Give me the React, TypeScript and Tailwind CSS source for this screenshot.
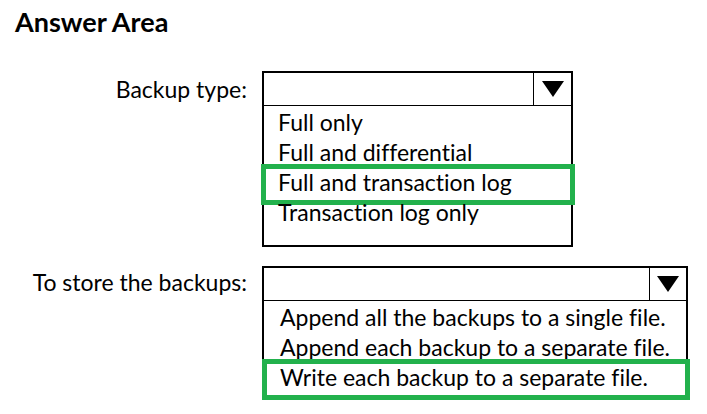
import React from 'react'

type Item = { label: string; picked?: boolean }

const font = { fontFamily: 'Lato, "Liberation Sans", sans-serif', fontVariantLigatures: 'none' as const }

function Arrow() {
  return (
    <svg width="22" height="16" viewBox="0 0 22 16" className="block">
      <polygon points="0,0 22,0 11,16" fill="#000" />
    </svg>
  )
}

function Dropdown({ width, cell, indent, items, tail, frame }: { width: string; cell: string; indent: string; items: Item[]; tail: string; frame: string }) {
  return (
    <div className={`border-2 border-black bg-white ${width}`}>
      <div className="flex h-[33px] border-b border-black">
        <div className="flex-1" />
        <div className={`flex items-center justify-center border-l border-black ${cell}`}>
          <Arrow />
        </div>
      </div>
      <div className={`pt-[4px] ${tail}`}>
        {items.map(it => (
          <div key={it.label} className={`relative h-[30px] text-[23px] leading-[25px] text-black ${indent}`}>
            {it.label}
            {it.picked && <div className={`absolute -top-[6px] -bottom-[5px] border-[5px] border-[#22b14c] ${frame}`} />}
          </div>
        ))}
      </div>
    </div>
  )
}

export default function App() {
  return (
    <div className="h-[414px] w-[707px] bg-white text-black" style={font}>
      <h1 className="pl-[15px] pt-[7px] text-[27px] font-bold leading-[30px]">Answer Area</h1>

      <div className="mt-[34px] flex items-start gap-[15px]">
        <div className="w-[247px] pt-[3px] text-right text-[23px] leading-[30px]">Backup type:</div>
        <Dropdown
          width="w-[311px]"
          cell="w-[38px]"
          indent="pl-[14px]"
          tail="pb-[15px]"
          frame="-left-[3px] -right-[4px]"
          items={[
            { label: 'Full only' },
            { label: 'Full and differential' },
            { label: 'Full and transaction log', picked: true },
            { label: 'Transaction log only' },
          ]}
        />
      </div>

      <div className="mt-[19px] flex items-start gap-[15px]">
        <div className="w-[247px] pt-[1px] text-right text-[23px] leading-[30px]">To store the backups:</div>
        <Dropdown
          width="w-[426px]"
          cell="w-[37px]"
          indent="pl-[16px]"
          tail="pb-[2px]"
          frame="-left-[2px] -right-[4px]"
          items={[
            { label: 'Append all the backups to a single file.' },
            { label: 'Append each backup to a separate file.' },
            { label: 'Write each backup to a separate file.', picked: true },
          ]}
        />
      </div>
    </div>
  )
}
